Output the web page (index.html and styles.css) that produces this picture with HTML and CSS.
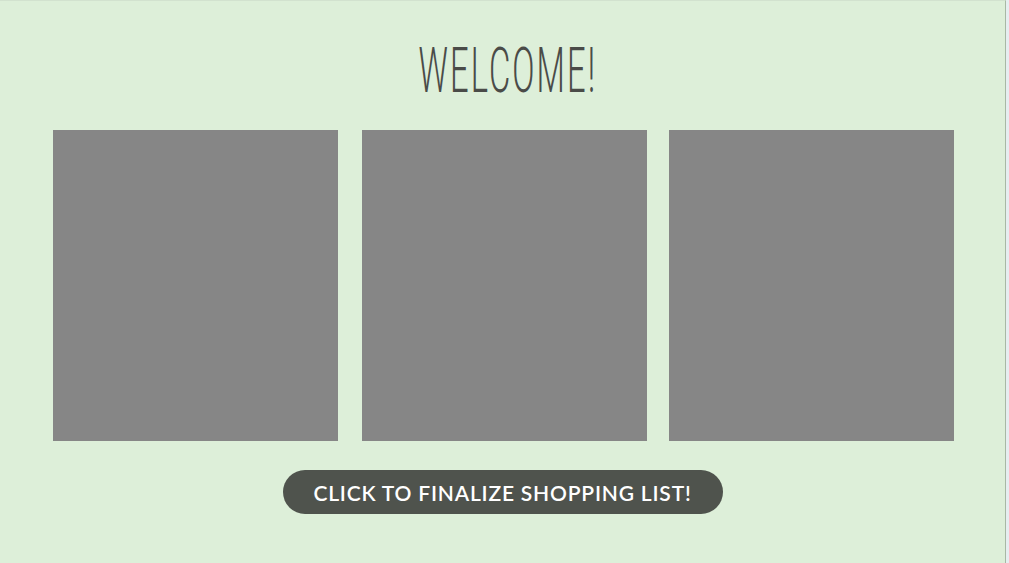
FILE: index.html
```html
<!DOCTYPE html>
<html>
<head>
<meta charset="utf-8">
<link rel="stylesheet" href="styles.css">
</head>
<body>
<div class="page">
  <h1 class="title"><span>WELCOME!</span></h1>
  <div class="tiles">
    <div class="tile"></div>
    <div class="tile"></div>
    <div class="tile"></div>
  </div>
  <div class="actions">
    <button class="finalize">CLICK TO FINALIZE SHOPPING LIST!</button>
  </div>
</div>
</body>
</html>
```
FILE: styles.css
```css
html, body {
  margin: 0;
  padding: 0;
  background: #e6eef0;
  height: 100%;
}
.page {
  width: 1006px;
  height: 563px;
  box-sizing: border-box;
  background: #ddefd9;
  border-right: 1px solid #a8b8a5;
  border-top: 1px solid #d2e2cf;
  display: flex;
  flex-direction: column;
  align-items: center;
}
.title {
  margin: 33px 0 0 0;
  height: 96px;
  font-family: Roboto, "Liberation Sans", sans-serif;
  font-weight: 300;
  font-size: 63px;
  line-height: 74px;
  color: #4a4b48;
  letter-spacing: 4px;
  padding-left: 10px;
}
.title span {
  display: inline-block;
  transform: scaleX(0.52);
}
.tiles {
  display: flex;
  padding-left: 2px;
}
.tile {
  width: 285px;
  height: 311px;
  background: #868686;
}
.tiles .tile:nth-child(1) { margin-right: 24px; }
.tiles .tile:nth-child(2) { margin-right: 22px; }
.actions {
  margin-top: 29px;
}
.finalize {
  width: 440px;
  height: 44px;
  border: none;
  border-radius: 22px;
  background: #4f534d;
  color: #ffffff;
  font-family: Lato, "Open Sans", sans-serif;
  font-weight: 600;
  font-size: 21px;
  letter-spacing: 0.8px;
  padding: 0;
  cursor: pointer;
}
```
